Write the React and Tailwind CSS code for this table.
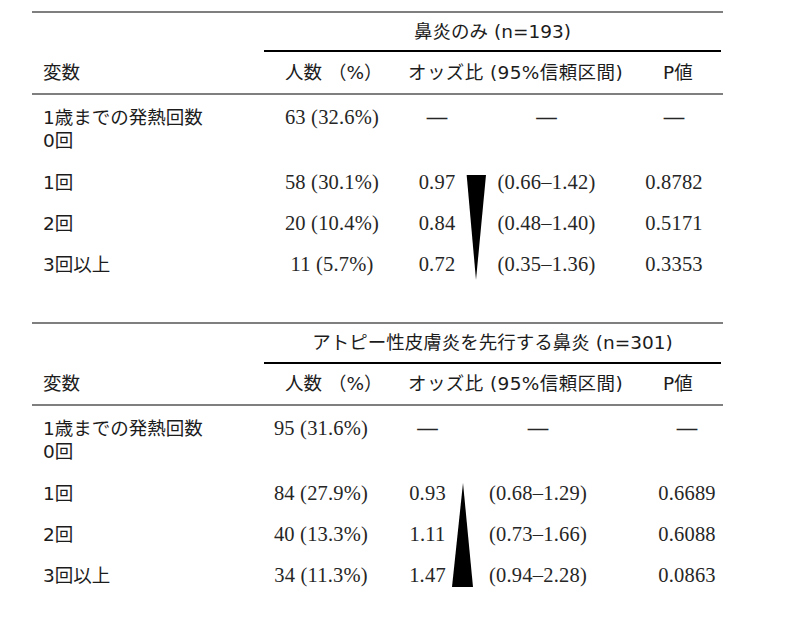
import React from "react";

const JP = "font-['DejaVu_Sans','Noto_Sans_CJK_JP',sans-serif] text-[18.5px] text-[#1c1c1c]";
const NUM = "font-['Liberation_Serif',serif] text-[20.5px] text-[#262626] tracking-[0.2px]";

function Dash() {
  return <span className={`${NUM} font-bold text-[#444]`}>—</span>;
}

function Triangle({ points }) {
  return (
    <svg width="100%" height="123" viewBox="0 0 21 123" preserveAspectRatio="none">
      <polygon points={points} fill="#000" />
    </svg>
  );
}

function Table({ title, cols, titleH, headerH, rows, triPoints, orPad, pPad, dashPad }) {
  return (
    <div className="w-[691px]">
      <div className="h-[2px] bg-[#7f7f7f]" />
      <div className={`${titleH} flex items-center pl-[232px] pr-[2px]`}>
        <div className={`${JP} w-full text-center`}>{title}</div>
      </div>
      <div className="ml-[232px] mr-[2px] h-[2px] bg-black" />
      <div className={`${headerH} flex items-center ${JP}`}>
        <div className="w-[253px] pl-[11px]">変数</div>
        <div className="w-[123px]">人数 （%）</div>
        <div className="w-[255px] tracking-[0.4px]">オッズ比 (95%信頼区間)</div>
        <div>P値</div>
      </div>
      <div className="h-[2px] bg-[#7f7f7f]" />

      <div className={`grid ${cols} pt-[11px] leading-[23px]`}>
        <div className={`${JP} pl-[11px]`}>
          <div>1歳までの発熱回数</div>
          <div>0回</div>
        </div>
        <div className={`${NUM} text-center`}>{rows[0].n}</div>
        <div className={`text-center ${orPad}`}><Dash /></div>
        <div />
        <div className="text-center"><Dash /></div>
        <div className={`text-center ${dashPad}`}><Dash /></div>
      </div>

      <div className={`grid ${cols} grid-rows-[41px_41px_41px] mt-[10px]`}>
        {rows.slice(1).map((r, i) => (
          <React.Fragment key={i}>
            <div className={`${JP} pl-[11px] flex items-center`} style={{ gridRow: i + 1, gridColumn: 1 }}>{r.label}</div>
            <div className={`${NUM} text-center flex items-center justify-center`} style={{ gridRow: i + 1, gridColumn: 2 }}>{r.n}</div>
            <div className={`${NUM} flex items-center justify-center ${orPad}`} style={{ gridRow: i + 1, gridColumn: 3 }}>{r.or}</div>
            <div className={`${NUM} flex items-center justify-center`} style={{ gridRow: i + 1, gridColumn: 5 }}>{r.ci}</div>
            <div className={`${NUM} flex items-center justify-center ${pPad}`} style={{ gridRow: i + 1, gridColumn: 6 }}>{r.p}</div>
          </React.Fragment>
        ))}
        <div className="row-start-1 row-span-3 col-start-4">
          <Triangle points={triPoints} />
        </div>
      </div>
    </div>
  );
}

export default function App() {
  return (
    <div className="w-[791px] h-[633px] bg-white pl-[32px] pt-[11px] overflow-hidden">
      <Table
        title="鼻炎のみ (n=193)"
        titleH="h-[37px]"
        headerH="h-[41px]"
        cols="grid-cols-[232px_136px_66px_20px_121px_116px]"
        orPad="pl-[8px]"
        pPad="pl-[18px]"
        dashPad="pl-[18px]"
        triPoints="0.7,13 21,13 10.5,118"
        rows={[
          { n: "63 (32.6%)" },
          { label: "1回", n: "58 (30.1%)", or: "0.97", ci: "(0.66–1.42)", p: "0.8782" },
          { label: "2回", n: "20 (10.4%)", or: "0.84", ci: "(0.48–1.40)", p: "0.5171" },
          { label: "3回以上", n: "11 (5.7%)", or: "0.72", ci: "(0.35–1.36)", p: "0.3353" },
        ]}
      />
      <div className="h-[37px]" />
      <Table
        title="アトピー性皮膚炎を先行する鼻炎 (n=301)"
        titleH="h-[38px]"
        headerH="h-[40px]"
        cols="grid-cols-[232px_114px_74px_21px_130px_120px]"
        orPad="pl-[25px]"
        pPad="pl-[48px]"
        dashPad="pl-[48px]"
        triPoints="0,114 21,114 11,10"
        rows={[
          { n: "95 (31.6%)" },
          { label: "1回", n: "84 (27.9%)", or: "0.93", ci: "(0.68–1.29)", p: "0.6689" },
          { label: "2回", n: "40 (13.3%)", or: "1.11", ci: "(0.73–1.66)", p: "0.6088" },
          { label: "3回以上", n: "34 (11.3%)", or: "1.47", ci: "(0.94–2.28)", p: "0.0863" },
        ]}
      />
    </div>
  );
}
